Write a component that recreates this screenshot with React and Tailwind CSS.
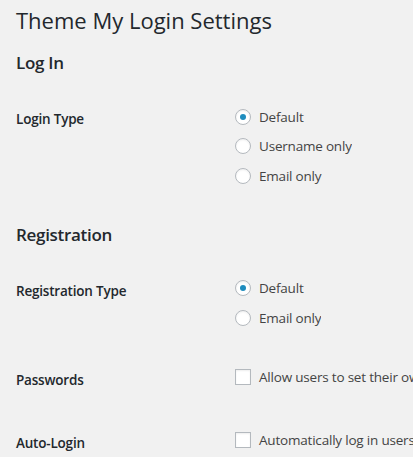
import React from 'react';

const Radio = ({ checked, label }) => (
    <label className="flex items-center h-[29.5px]">
        <span className="w-4 h-4 rounded-full border border-[#b4b9be] bg-white shadow-[inset_0_1px_2px_rgba(0,0,0,0.07)] flex items-center justify-center shrink-0">
            {checked && <span className="w-[6px] h-[6px] rounded-full bg-[#1e8cbe]"></span>}
        </span>
        <span className="ml-2 text-[13.5px] tracking-[-0.2px] text-[#444] whitespace-nowrap">{label}</span>
    </label>
);

const Checkbox = ({ label }) => (
    <label className="flex items-center h-[29px]">
        <span className="w-4 h-4 border border-[#b4b9be] bg-white shadow-[inset_0_1px_2px_rgba(0,0,0,0.07)] shrink-0"></span>
        <span className="ml-2 text-[13.5px] tracking-[-0.2px] text-[#444] whitespace-nowrap">{label}</span>
    </label>
);

const Row = ({ label, children, className = '' }) => (
    <div className={`flex ${className}`}>
        <div className="w-[219px] shrink-0 pt-[3px] text-[13.5px] tracking-[-0.2px] font-semibold leading-[29px]">{label}</div>
        <div className="flex flex-col min-w-0 overflow-hidden">{children}</div>
    </div>
);

export default function App() {
    return (
        <div className="min-h-screen bg-[#f1f1f1] pl-4 text-[#23282d] overflow-hidden" style={{ fontFamily: '"Open Sans", "Noto Sans", sans-serif' }}>
            <h1 className="pt-[6px] text-[22px] leading-[29px] font-normal whitespace-nowrap">Theme My Login Settings</h1>

            <h2 className="mt-[16px] text-[17px] tracking-[-0.3px] leading-[24px] font-semibold">Log In</h2>

            <Row label="Login Type" className="mt-[27px]">
                <Radio checked label="Default" />
                <Radio label="Username only" />
                <Radio label="Email only" />
            </Row>

            <h2 className="mt-[32px] text-[17px] tracking-[-0.3px] leading-[24px] font-semibold">Registration</h2>

            <Row label="Registration Type" className="mt-[27px]">
                <Radio checked label="Default" />
                <Radio label="Email only" />
            </Row>

            <Row label="Passwords" className="mt-[30px]">
                <Checkbox label="Allow users to set their own password" />
            </Row>

            <Row label="Auto-Login" className="mt-[31px]">
                <Checkbox label="Automatically log in users after registration" />
            </Row>
        </div>
    );
}
